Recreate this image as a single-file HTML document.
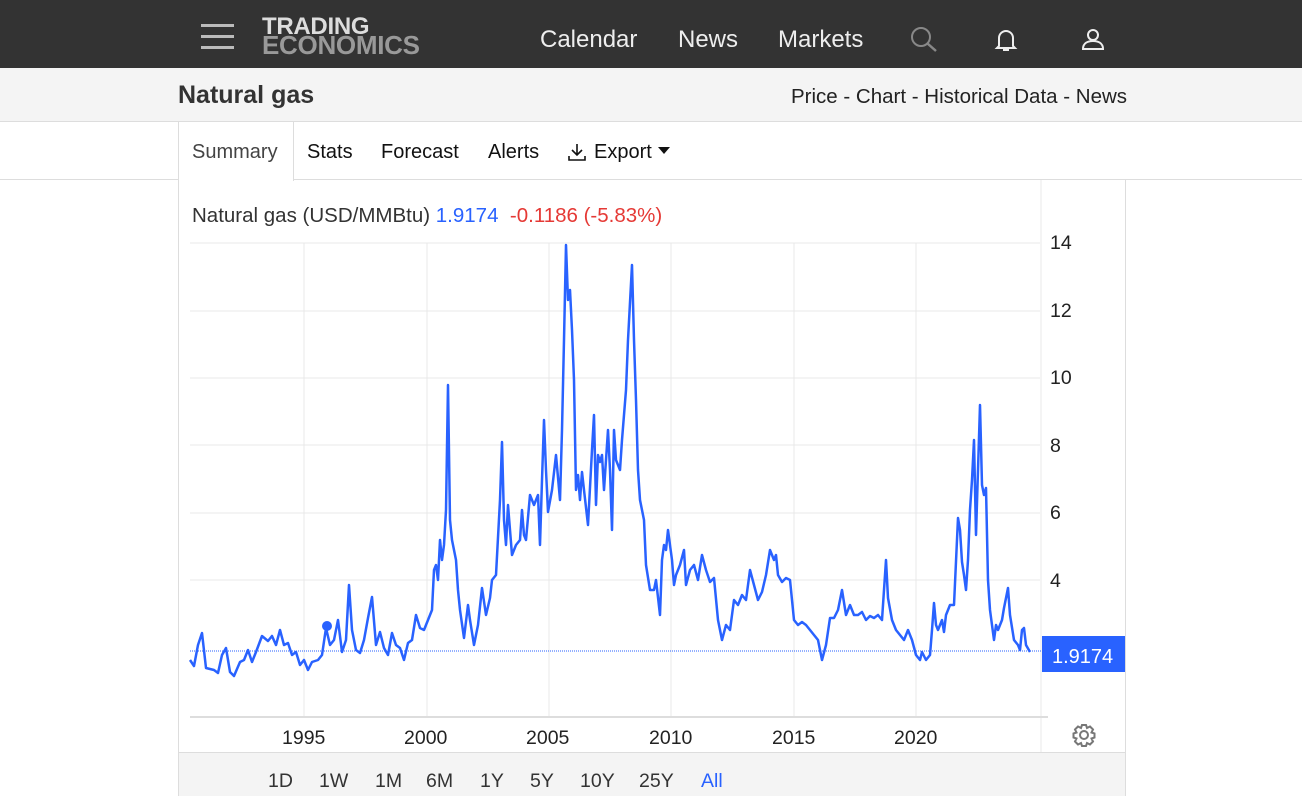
<!DOCTYPE html><html><head><style>
*{margin:0;padding:0;box-sizing:border-box}
body{width:1302px;height:796px;overflow:hidden;background:#fff;font-family:"Liberation Sans",Arial,sans-serif;position:relative}
.top{position:absolute;left:0;top:0;width:1302px;height:68px;background:#333}
.ham{position:absolute;left:201px;width:33px;height:3px;background:#bbb}
.logo{position:absolute;left:262px;top:17px;font-weight:bold;font-size:24px;line-height:19px;letter-spacing:-0.3px}
.nav{position:absolute;top:26px;color:#eee;font-size:24px}
.sub{position:absolute;left:0;top:68px;width:1302px;height:54px;background:#f4f4f4;border-bottom:1px solid #ddd}
.tabs{position:absolute;top:122px;left:0;width:1302px;height:58px;border-bottom:1px solid #ddd}
.tab{position:absolute;top:141px;font-size:20px;color:#111}
.ax{position:absolute;font-size:19.5px;color:#222}
</style></head><body>
<div class="top">
<div class="ham" style="top:24px"></div><div class="ham" style="top:35px"></div><div class="ham" style="top:46px"></div>
<div class="logo"><div style="color:#ddd">TRADING</div><div style="color:#999;font-size:26px">ECONOMICS</div></div>
<div class="nav" style="left:540px">Calendar</div>
<div class="nav" style="left:678px">News</div>
<div class="nav" style="left:778px">Markets</div>
<svg style="position:absolute;left:910px;top:26px" width="28" height="26" viewBox="0 0 28 26"><circle cx="11" cy="11" r="9" fill="none" stroke="#888" stroke-width="2"/><line x1="17.5" y1="17.5" x2="26" y2="25" stroke="#888" stroke-width="2.5"/></svg>
<svg style="position:absolute;left:993px;top:27px" width="26" height="26" viewBox="0 0 26 26"><path d="M6 19V11a7 7 0 0 1 14 0v8l2 2H4z" fill="none" stroke="#eee" stroke-width="2"/><path d="M10 23h6" stroke="#eee" stroke-width="2"/></svg>
<svg style="position:absolute;left:1080px;top:26px" width="26" height="26" viewBox="0 0 26 26"><circle cx="13" cy="9" r="5" fill="none" stroke="#eee" stroke-width="2"/><path d="M3 23c0-6 5-8 10-8s10 2 10 8z" fill="none" stroke="#eee" stroke-width="2"/></svg>
</div>
<div class="sub">
<div style="position:absolute;left:178px;top:13px;font-size:25px;font-weight:bold;color:#333">Natural gas</div>
<div style="position:absolute;left:791px;top:17px;font-size:20.5px;color:#222">Price - Chart - Historical Data - News</div>
</div>
<div class="tabs"></div>
<div style="position:absolute;left:178px;top:122px;width:116px;height:59px;background:#fff;border-left:1px solid #ddd;border-right:1px solid #ddd"></div>
<div class="tab" style="left:192px;color:#444">Summary</div>
<div class="tab" style="left:307px">Stats</div>
<div class="tab" style="left:381px">Forecast</div>
<div class="tab" style="left:488px">Alerts</div>
<svg style="position:absolute;left:567px;top:142px" width="20" height="20" viewBox="0 0 20 20" fill="none" stroke="#111" stroke-width="1.6"><path d="M10 2v11M5 8l5 5 5-5M2 14v4h16v-4"/></svg>
<div class="tab" style="left:594px">Export</div>
<svg style="position:absolute;left:658px;top:147px" width="12" height="8"><path d="M0 0h12L6 7z" fill="#111"/></svg>
<div style="position:absolute;left:178px;top:180px;width:948px;height:616px;border-left:1px solid #ddd;border-right:1px solid #ddd"></div>
<div style="position:absolute;left:179px;top:752px;width:946px;height:44px;background:#f4f4f4;border-top:1px solid #ddd"></div>
<div style="position:absolute;left:192px;top:204px;font-size:20.5px;color:#333;white-space:nowrap">Natural gas (USD/MMBtu) <span style="color:#2962ff">1.9174</span> &nbsp;<span style="color:#e53935">-0.1186 (-5.83%)</span></div>
<svg style="position:absolute;left:0;top:0" width="1302" height="796">
<g stroke="#e8e8e8" stroke-width="1">
<line x1="190" y1="243" x2="1040" y2="243"/><line x1="190" y1="311" x2="1040" y2="311"/><line x1="190" y1="378" x2="1040" y2="378"/><line x1="190" y1="445" x2="1040" y2="445"/><line x1="190" y1="513" x2="1040" y2="513"/><line x1="190" y1="580" x2="1040" y2="580"/>
<line x1="304" y1="243" x2="304" y2="716"/><line x1="427" y1="243" x2="427" y2="716"/><line x1="549" y1="243" x2="549" y2="716"/><line x1="671" y1="243" x2="671" y2="716"/><line x1="794" y1="243" x2="794" y2="716"/><line x1="916" y1="243" x2="916" y2="716"/>
<line x1="1041" y1="180" x2="1041" y2="752"/>
</g>
<line x1="190" y1="717" x2="1048" y2="717" stroke="#ddd" stroke-width="2"/>
<line x1="190" y1="651" x2="1042" y2="651" stroke="#2962ff" stroke-width="1" stroke-dasharray="1,1"/>
<polyline fill="none" stroke="#2962ff" stroke-width="2.5" stroke-linejoin="round" points="190,660 194,666 198,645 202,633 206,668 214,670 218,673 222,655 226,648 230,672 234,676 240,662 244,660 248,650 252,662 256,652 262,636 268,641 272,636 276,645 280,630 284,645 288,643 292,655 296,652 300,665 304,660 308,670 312,662 318,660 322,655 326,628 330,645 334,640 338,620 342,652 346,640 349,585 352,630 356,650 360,653 364,640 368,618 372,597 376,645 380,632 384,648 388,655 392,633 396,645 400,648 404,660 408,643 412,640 416,615 420,628 424,630 428,620 432,610 434,570 436,565 438,580 440,540 442,560 444,545 446,510 448,385 450,520 452,540 454,550 456,560 458,590 460,610 464,638 468,605 470,620 474,645 478,625 482,588 486,615 490,598 492,580 496,575 500,500 502,442 504,520 506,545 508,505 512,555 516,545 520,540 522,510 524,535 526,540 530,495 534,505 538,495 540,545 542,480 544,420 546,470 548,512 552,490 556,455 560,500 562,430 564,340 566,245 568,300 570,290 572,330 574,380 576,490 578,475 580,500 582,472 584,490 588,525 592,450 594,415 596,505 598,455 600,462 602,455 604,490 608,430 610,470 612,530 614,430 616,460 620,470 622,440 626,390 628,340 632,265 634,340 636,400 638,470 640,500 644,520 646,565 650,590 654,590 656,580 660,615 662,560 664,545 666,550 668,530 670,545 672,560 674,585 676,575 680,565 684,550 686,585 690,570 694,565 698,580 702,555 706,570 710,582 714,578 718,620 722,640 726,625 730,630 734,600 738,605 742,595 746,600 750,570 754,585 758,600 762,592 766,575 770,550 774,560 776,555 778,575 782,582 786,578 790,580 794,620 798,625 802,622 806,625 810,630 814,635 818,640 822,660 826,645 830,618 834,618 838,610 842,590 846,615 850,605 854,615 858,615 862,612 866,620 870,616 874,618 878,615 882,620 886,560 888,598 892,620 896,630 900,635 904,640 908,630 912,640 916,655 920,660 922,652 926,660 930,655 932,630 934,603 936,625 938,630 940,625 942,620 944,632 946,615 950,605 954,605 958,518 960,530 962,562 964,575 966,590 968,560 970,510 972,480 974,440 976,535 978,470 980,405 982,485 984,495 986,488 988,580 990,610 994,640 996,625 998,630 1002,620 1004,608 1008,588 1010,615 1014,640 1018,645 1020,650 1022,630 1024,628 1026,645 1030,652"/>
<circle cx="327" cy="626" r="5" fill="#2962ff"/>
<rect x="1042" y="636" width="83" height="36" fill="#2962ff"/>
<text x="1052" y="663" fill="#fff" font-size="20" font-family="Liberation Sans,sans-serif">1.9174</text>
<g transform="translate(1084,735)" fill="none" stroke="#777" stroke-width="2"><circle r="4"/><path d="M-2 -10h4l1 3 3 -1.5 3 3-1.5 3 3 1v4l-3 1 1.5 3-3 3-3-1.5-1 3h-4l-1-3-3 1.5-3-3 1.5-3-3-1v-4l3-1-1.5-3 3-3 3 1.5z"/></g>
</svg>
<div class="ax" style="left:1050px;top:232px">14</div>
<div class="ax" style="left:1050px;top:300px">12</div>
<div class="ax" style="left:1050px;top:367px">10</div>
<div class="ax" style="left:1050px;top:435px">8</div>
<div class="ax" style="left:1050px;top:502px">6</div>
<div class="ax" style="left:1050px;top:570px">4</div>
<div class="ax" style="left:282px;top:727px">1995</div>
<div class="ax" style="left:404px;top:727px">2000</div>
<div class="ax" style="left:526px;top:727px">2005</div>
<div class="ax" style="left:649px;top:727px">2010</div>
<div class="ax" style="left:772px;top:727px">2015</div>
<div class="ax" style="left:894px;top:727px">2020</div>
<div style="position:absolute;top:770px;left:0;font-size:19.5px;color:#333">
<span style="position:absolute;left:268px">1D</span><span style="position:absolute;left:319px">1W</span><span style="position:absolute;left:375px">1M</span><span style="position:absolute;left:426px">6M</span><span style="position:absolute;left:480px">1Y</span><span style="position:absolute;left:530px">5Y</span><span style="position:absolute;left:580px">10Y</span><span style="position:absolute;left:639px">25Y</span><span style="position:absolute;left:701px;color:#2962ff">All</span></div>
</body></html>
